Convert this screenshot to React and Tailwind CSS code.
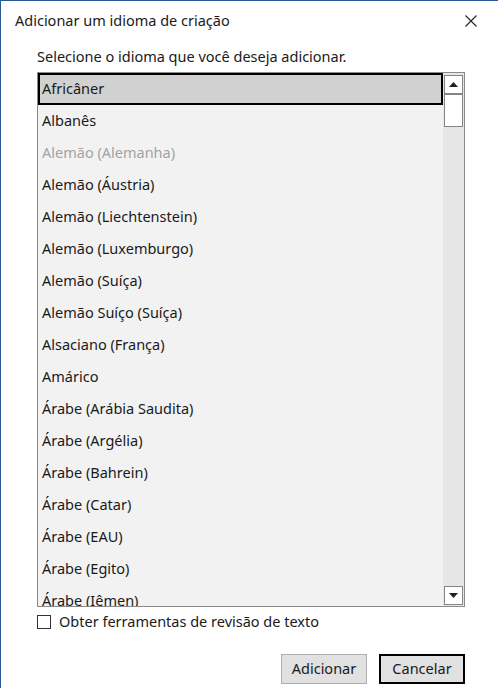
import React from 'react'

const idiomas = [
  { nome: 'Africâner', selecionado: true },
  { nome: 'Albanês' },
  { nome: 'Alemão (Alemanha)', desativado: true },
  { nome: 'Alemão (Áustria)' },
  { nome: 'Alemão (Liechtenstein)' },
  { nome: 'Alemão (Luxemburgo)' },
  { nome: 'Alemão (Suíça)' },
  { nome: 'Alemão Suíço (Suíça)' },
  { nome: 'Alsaciano (França)' },
  { nome: 'Amárico' },
  { nome: 'Árabe (Arábia Saudita)' },
  { nome: 'Árabe (Argélia)' },
  { nome: 'Árabe (Bahrein)' },
  { nome: 'Árabe (Catar)' },
  { nome: 'Árabe (EAU)' },
  { nome: 'Árabe (Egito)' },
  { nome: 'Árabe (Iêmen)' },
]

export default function App() {
  return (
    <div
      className="w-[498px] h-[688px] bg-white border-l border-t border-[#2b5797] text-[14.5px] text-black overflow-hidden flex flex-col"
      style={{ fontFamily: '"Noto Sans", "Liberation Sans", sans-serif' }}
    >
      {/* barra de título */}
      <div className="h-[40px] flex items-center justify-between pl-[14px] pr-[20px]">
        <span className="text-[#1a1a1a]">Adicionar um idioma de criação</span>
        <svg width="12" height="12" viewBox="0 0 12 12" className="mr-[1px]">
          <path d="M0.5 0.5 L11.5 11.5 M11.5 0.5 L0.5 11.5" stroke="#222" strokeWidth="1.1" fill="none" />
        </svg>
      </div>

      <div className="pl-[36px] pr-[33px] flex flex-col">
        <div className="h-[32px] leading-[32px] -mt-[1px] text-[#1a1a1a]">Selecione o idioma que você deseja adicionar.</div>

        {/* lista */}
        <div className="h-[535px] border border-[#8a8a8a] bg-[#f2f2f2] flex overflow-hidden">
          <div className="flex-1 flex flex-col overflow-hidden">
            {idiomas.map(i => (
              <div
                key={i.nome}
                className={
                  'h-[32px] shrink-0 flex items-center ' +
                  (i.selecionado ? 'bg-[#d1d1d1] border-2 border-black pl-[2px] ' : 'pl-[4px] ') +
                  (i.desativado ? 'text-[#a3a3a3]' : 'text-[#1a1a1a]')
                }
              >
                {i.nome}
              </div>
            ))}
          </div>
          <div className="w-[21px] bg-[#e6e6e6] flex flex-col items-center pt-[2px] pb-[1px] px-[1px]">
            <div className="w-[19px] h-[19px] bg-white border border-[#858585] flex items-center justify-center">
              <svg width="9" height="5" viewBox="0 0 9 5"><path d="M0 5 L4.5 0 L9 5 Z" fill="#222" /></svg>
            </div>
            <div className="w-[19px] h-[33px] bg-white border border-[#858585]"></div>
            <div className="flex-1"></div>
            <div className="w-[19px] h-[19px] bg-white border border-[#858585] flex items-center justify-center">
              <svg width="9" height="5" viewBox="0 0 9 5"><path d="M0 0 L4.5 5 L9 0 Z" fill="#222" /></svg>
            </div>
          </div>
        </div>

        {/* caixa de seleção */}
        <div className="flex items-center gap-[8px] mt-[7px] h-[16px]">
          <div className="w-[14px] h-[14px] border border-[#333] bg-white"></div>
          <span className="text-[#1a1a1a]">Obter ferramentas de revisão de texto</span>
        </div>

        {/* botões */}
        <div className="flex justify-end gap-[12px] mt-[24px]">
          <button className="w-[86px] h-[30px] bg-[#e1e1e1] border border-[#adadad] text-[#1a1a1a]">Adicionar</button>
          <button className="w-[86px] h-[30px] bg-[#e1e1e1] border-2 border-black text-[#1a1a1a]">Cancelar</button>
        </div>
      </div>
    </div>
  )
}
